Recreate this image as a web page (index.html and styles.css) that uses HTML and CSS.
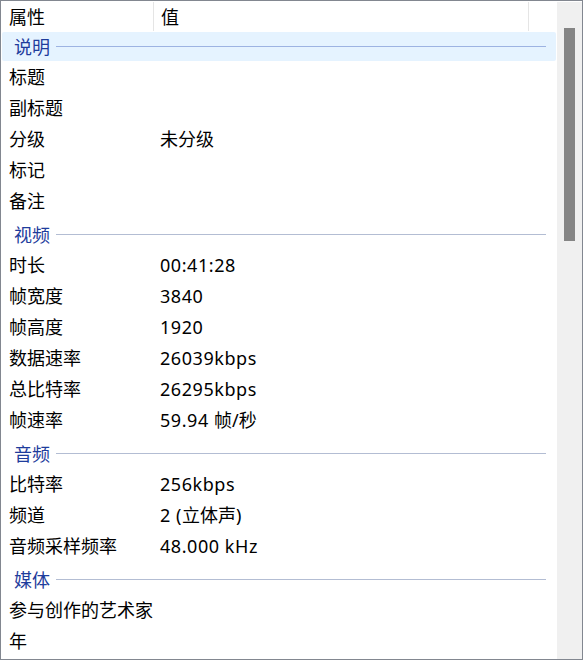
FILE: index.html
```html
<!DOCTYPE html>
<html lang="zh-CN">
<head>
<meta charset="utf-8">
<link rel="stylesheet" href="styles.css">
</head>
<body>
<div class="frame">
  <div class="list">
    <div class="header">
      <div class="hcell c1">属性</div>
      <div class="hcell c2">值</div>
      <div class="hcell c3"></div>
    </div>
    <div class="group selected first"><span class="gname">说明</span><span class="gline"></span></div>
    <div class="row"><span class="k">标题</span><span class="v"></span></div>
    <div class="row"><span class="k">副标题</span><span class="v"></span></div>
    <div class="row"><span class="k">分级</span><span class="v">未分级</span></div>
    <div class="row"><span class="k">标记</span><span class="v"></span></div>
    <div class="row"><span class="k">备注</span><span class="v"></span></div>
    <div class="group"><span class="gname">视频</span><span class="gline"></span></div>
    <div class="row"><span class="k">时长</span><span class="v"><span class="lat">00:41:28</span></span></div>
    <div class="row"><span class="k">帧宽度</span><span class="v"><span class="lat">3840</span></span></div>
    <div class="row"><span class="k">帧高度</span><span class="v"><span class="lat">1920</span></span></div>
    <div class="row"><span class="k">数据速率</span><span class="v"><span class="lat">26039kbps</span></span></div>
    <div class="row"><span class="k">总比特率</span><span class="v"><span class="lat">26295kbps</span></span></div>
    <div class="row"><span class="k">帧速率</span><span class="v"><span class="lat">59.94 </span>帧/秒</span></div>
    <div class="group"><span class="gname">音频</span><span class="gline"></span></div>
    <div class="row"><span class="k">比特率</span><span class="v"><span class="lat">256kbps</span></span></div>
    <div class="row"><span class="k">频道</span><span class="v"><span class="lat">2 (</span>立体声<span class="lat">)</span></span></div>
    <div class="row"><span class="k">音频采样频率</span><span class="v"><span class="lat">48.000 kHz</span></span></div>
    <div class="group"><span class="gname">媒体</span><span class="gline"></span></div>
    <div class="row"><span class="k">参与创作的艺术家</span><span class="v"></span></div>
    <div class="row"><span class="k">年</span><span class="v"></span></div>
  </div>
  <div class="scrollbar"><div class="thumb"></div></div>
</div>
</body>
</html>
```
FILE: styles.css
```css
html, body {
  margin: 0;
  padding: 0;
  background: #ffffff;
}
body {
  font-family: "Noto Sans", "Noto Sans CJK SC", sans-serif;
  font-size: 18px;
  color: #000;
}
.frame {
  box-sizing: border-box;
  width: 583px;
  height: 660px;
  border: 1px solid #828790;
  display: flex;
  overflow: hidden;
  background: #fff;
}
.list {
  flex: 1;
  display: flex;
  flex-direction: column;
  overflow: hidden;
  padding-left: 1px;
}
.header {
  display: flex;
  height: 30px;
  flex: none;
}
.hcell {
  box-sizing: border-box;
  display: flex;
  align-items: center;
  padding-left: 7px;
  border-right: 1px solid #e5e5e5;
  margin-top: 1px;
  line-height: 1;
}
.c1 { width: 152px; }
.c2 { width: 375px; }
.c3 { flex: 1; border-right: none; }
.group {
  flex: none;
  height: 29px;
  margin-top: 4px;
  display: flex;
  align-items: center;
  padding-left: 12px;
  padding-right: 10px;
  border-radius: 2px;
  margin-right: 1px;
}
.group.first { margin-top: 1px; }
.group.selected { background: #e5f3ff; }
.gname {
  color: #1e3c9c;
  line-height: 1;
  margin-right: 6px;
}
.gline {
  flex: 1;
  height: 1px;
  background: #b3bdd3;
}
.group.selected .gline { background: #9db3e2; }
.row {
  flex: none;
  height: 31px;
  display: flex;
  align-items: center;
  line-height: 1;
}
.k {
  width: 151px;
  padding-left: 7px;
  white-space: nowrap;
}
.v {
  white-space: nowrap;
}
.lat {
  letter-spacing: 0.55px;
}
.scrollbar {
  flex: none;
  width: 25px;
  background: #f0f0f0;
  margin-top: 1px;
  position: relative;
}
.thumb {
  position: absolute;
  left: 7px;
  width: 11px;
  top: 26px;
  height: 213px;
  background: #858585;
}
```
